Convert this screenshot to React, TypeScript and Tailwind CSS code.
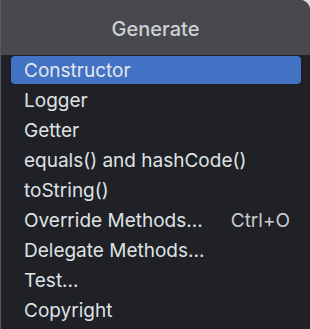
const items = [
  { label: 'Constructor', selected: true },
  { label: 'Logger' },
  { label: 'Getter' },
  { label: 'equals() and hashCode()' },
  { label: 'toString()' },
  { label: 'Override Methods...', shortcut: 'Ctrl+O' },
  { label: 'Delegate Methods...' },
  { label: 'Test...' },
  { label: 'Copyright' },
];

export default function App() {
  return (
    <div className="w-[310px] h-[329px] bg-[#d6d7d9] overflow-hidden">
      <div
        className="w-full h-full flex flex-col bg-[#1f2126] border-l border-[#55585d] rounded-tr-[10px] overflow-hidden"
        style={{ fontFamily: 'Inter, "Noto Sans", sans-serif' }}
      >
        <div className="h-[55px] shrink-0 flex items-center justify-center bg-[#47494e]">
          <span className="text-[20px] leading-none font-medium text-[#cfd1d4] mt-[2px]">Generate</span>
        </div>
        <div className="flex flex-col pl-[10px] pr-[9px]">
          {items.map((item) => (
            <div key={item.label} className="h-[30px] py-px">
              <div
                className={`h-full flex items-center justify-between pl-[13px] pr-[11px] rounded-[4px] text-[19px] leading-none ${
                  item.selected ? 'bg-[#4272c4] text-[#e4e7ec]' : 'text-[#dfe1e5]'
                }`}
              >
                <span>{item.label}</span>
                {item.shortcut && <span className="text-[#c9ccd1]">{item.shortcut}</span>}
              </div>
            </div>
          ))}
        </div>
      </div>
    </div>
  );
}
